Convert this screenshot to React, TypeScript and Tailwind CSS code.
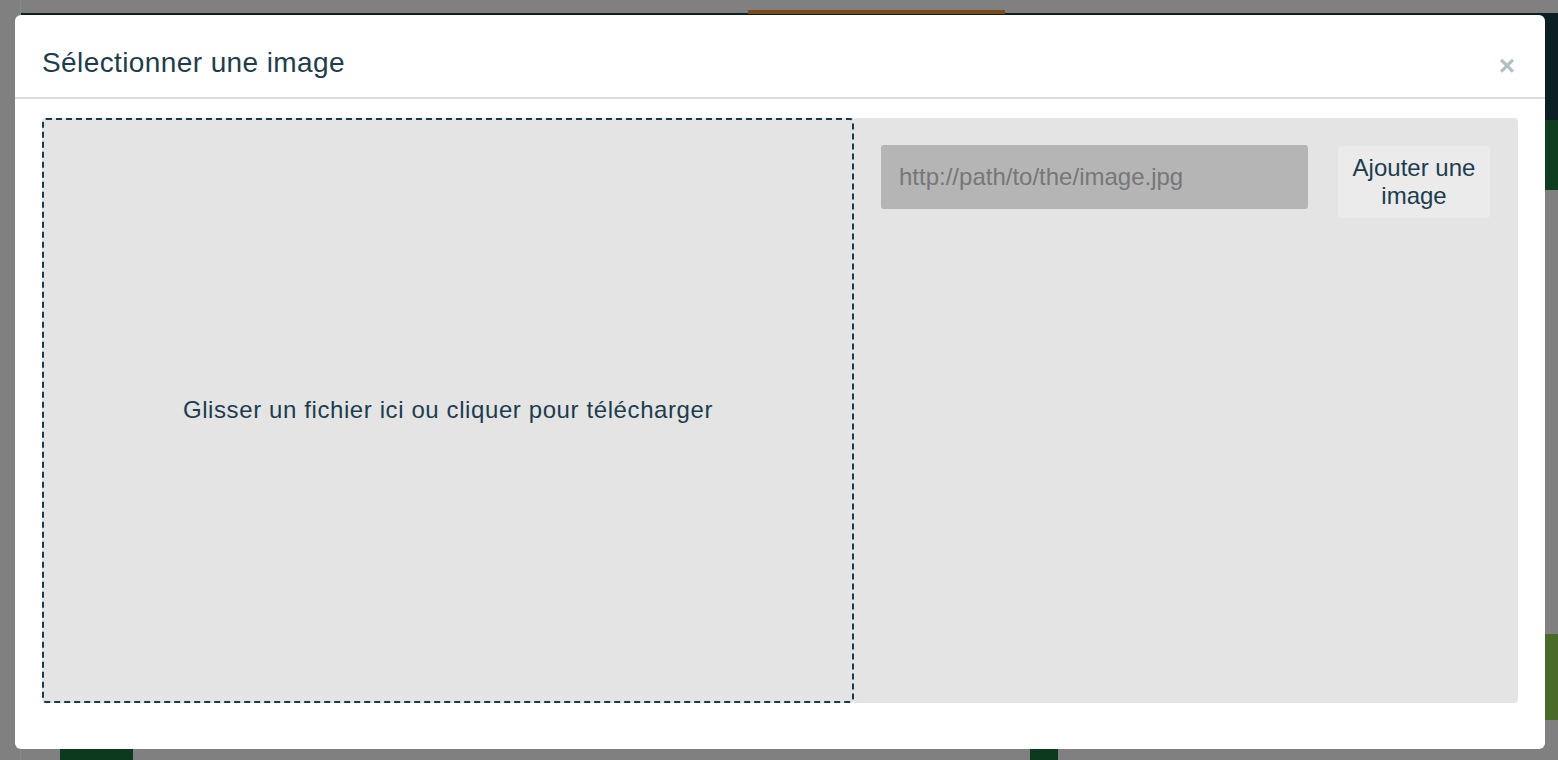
import React from "react";

const font = { fontFamily: '"Liberation Sans", Arial, sans-serif' };

const Backdrop = () => (
  <div className="absolute inset-0 bg-[#808080]">
    <div className="absolute left-[20px] right-0 top-[13px] h-[120px] bg-[#0c1f24]" />
    <div className="absolute left-[748px] w-[257px] top-[10px] h-[4px] bg-[#7a4a1a]" />
    <div className="absolute right-0 w-[14px] top-[120px] h-[70px] bg-[#0f3d20]" />
    <div className="absolute right-0 w-[14px] top-[634px] h-[86px] bg-[#4a6a2a]" />
    <div className="absolute left-[60px] w-[73px] bottom-0 h-[12px] bg-[#0c3a1e]" />
    <div className="absolute left-[1030px] w-[28px] bottom-0 h-[12px] bg-[#0c3a1e]" />
    <div className="absolute left-[20px] top-0 bottom-0 w-px bg-[#888]" />
  </div>
);

export default function App() {
  return (
    <div className="relative h-[760px] w-[1558px] overflow-hidden" style={font}>
      <Backdrop />
      <div className="absolute left-[15px] top-[15px] w-[1530px] h-[734px] bg-white rounded-[6px] flex flex-col">
        <div className="flex items-center justify-between h-[84px] pt-[13px] px-[27px] border-b-2 border-[#dcdcdc]">
          <h2 className="text-[28px] text-[#1d3d4e] font-normal tracking-[0.4px]">Sélectionner une image</h2>
          <button className="text-[28px] font-bold leading-none text-[#b3bfc3] mr-[3px] mt-[6px]">×</button>
        </div>
        <div className="flex px-[27px] pt-[19px] pb-[46px] flex-1">
          <div className="w-[812px] flex items-center justify-center bg-[#e4e4e4] border-2 border-dashed border-[#173a4d] rounded-[4px]">
            <p className="text-[24px] tracking-[0.6px] text-[#1d3d4e] mt-[-2px]">Glisser un fichier ici ou cliquer pour télécharger</p>
          </div>
          <div className="flex-1 bg-[#e4e4e4] rounded-r-[4px] flex items-start gap-[30px] pl-[27px] pr-[28px] pt-[27px]">
            <input
              className="w-[427px] h-[64px] bg-[#b5b5b5] rounded-[3px] px-[18px] text-[24px] text-[#333] placeholder:text-[#777] outline-none"
              placeholder="http://path/to/the/image.jpg"
            />
            <button className="w-[152px] h-[72px] mt-[1px] bg-[#ebebeb] rounded-[3px] text-[24px] leading-[28px] text-[#1d3d4e]">
              Ajouter une image
            </button>
          </div>
        </div>
      </div>
    </div>
  );
}
